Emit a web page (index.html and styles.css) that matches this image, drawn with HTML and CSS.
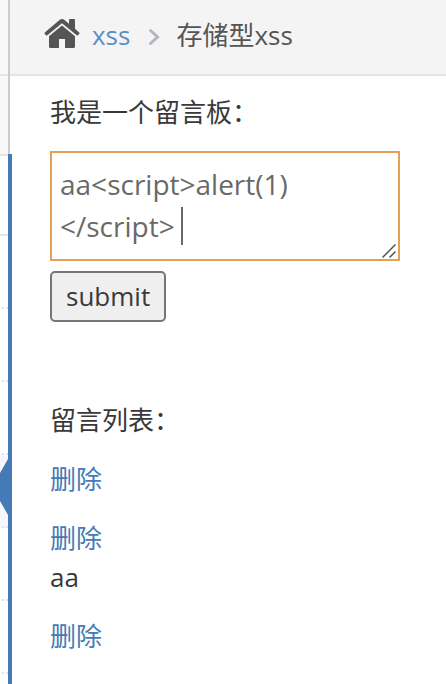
FILE: index.html
```
<!DOCTYPE html>
<html lang="zh-CN">
<head>
<meta charset="utf-8">
<meta name="viewport" content="width=device-width, initial-scale=1">
<title>存储型xss</title>
<link rel="stylesheet" href="styles.css">
</head>
<body>
<div class="page">
  <aside class="sidebar">
    <div class="sidebar-top">
      <div class="sidebar-item"></div>
      <div class="sidebar-item"></div>
    </div>
    <div class="submenu">
      <div class="submenu-head"></div>
      <div class="submenu-item"></div>
      <div class="submenu-item"></div>
      <div class="submenu-item"></div>
      <div class="submenu-item active"><svg class="arrow" viewBox="0 0 8 56" aria-hidden="true"><path d="M8 0L0 14V42L8 56Z"/></svg></div>
      <div class="submenu-item"></div>
      <div class="submenu-item"></div>
      <div class="submenu-item"></div>
    </div>
  </aside>
  <div class="main">
    <nav class="breadcrumb">
      <svg class="home" viewBox="0 0 36 30" aria-hidden="true">
        <path d="M18 6.500L31 17.300V27.500Q31 29 29.500 29H21V20H15V29H6.500Q5 29 5 27.500V17.300Z"/>
        <path d="M18 0Q19.200 0 20.200 .8L25 4.800V1Q25 0 26 0H30Q31 0 31 1V9.800L35.200 13.400Q35.900 14 35.300 14.700L34 16.200Q33.400 16.900 32.700 16.300L18 4.200L3.300 16.300Q2.600 16.900 2 16.200L.7 14.700Q.1 14 .8 13.400L15.800 .8Q16.800 0 18 0Z"/>
      </svg>
      <a class="crumb-link" href="#">xss</a>
      <svg class="chevron" viewBox="0 0 12 18" aria-hidden="true"><path d="M2.500 2.500L9.500 9L2.500 15.500"/></svg>
      <span>存储型xss</span>
    </nav>
    <main class="content">
      <form class="form">
        <label class="title" for="message">我是一个留言板：</label>
        <div class="field">
          <textarea class="message" id="message" rows="2">aa&lt;script&gt;alert(1)
&lt;/script&gt; </textarea>
          <span class="caret"></span>
          <svg class="grip" viewBox="0 0 14 14" aria-hidden="true"><path d="M.5 13.500L13.500 .5M7.500 13.500L13.500 7.500"/></svg>
        </div>
        <button class="submit" type="button">submit</button>
      </form>
      <section class="list">
        <h2 class="title">留言列表：</h2>
        <div class="entry"><a href="#">删除</a></div>
        <div class="entry"><a href="#">删除</a></div>
        <p class="text">aa</p>
        <div class="entry"><a href="#">删除</a></div>
      </section>
    </main>
  </div>
</div>
</body>
</html>
```
FILE: styles.css
```
* {
  box-sizing: border-box;
}

body {
  margin: 0;
  background: #fff;
  color: #393939;
  font: 26px/39px "Open Sans", "Noto Sans CJK SC", sans-serif;
}

a {
  color: #447bb6;
  text-decoration: none;
}

.page {
  display: flex;
  height: 100vh;
  overflow: hidden;
}

.sidebar {
  position: relative;
  z-index: 1;
  flex: none;
  width: 12px;
  margin-right: -2px;
}

.sidebar-top {
  width: 10px;
  border-right: 2px solid #ccc;
  background: #f8f8f8;
}

.sidebar-item {
  height: 80px;
  border-bottom: 2px solid #e5e5e5;
}

.sidebar-item:first-child {
  height: 76px;
}

.submenu {
  margin-top: -2px;
  border-right: 4px solid #447bb6;
}

.submenu-head {
  height: 82px;
  border-top: 2px solid #e5e5e5;
  border-bottom: 2px solid #e5e5e5;
  background: #fff;
}

.submenu-item {
  height: 73px;
  background: repeating-linear-gradient(90deg, transparent 0 2px, #e2e2e2 2px 4px) bottom / 100% 2px no-repeat;
}

.submenu-item.active {
  padding-top: 4px;
  background-color: #f5f7fc;
}

.arrow {
  display: block;
  width: 8px;
  height: 56px;
  fill: #447bb6;
}

.main {
  flex: 1;
  min-width: 0;
}

.breadcrumb {
  display: flex;
  align-items: center;
  height: 76px;
  padding: 0 34px 4px;
  border-bottom: 2px solid #e5e5e5;
  background: #f4f4f4;
  color: #555;
}

.home {
  width: 36px;
  height: 30px;
  margin: 0 12px 2px 0;
  fill: #555;
}

.crumb-link {
  color: #5a8fc4;
}

.chevron {
  width: 12px;
  height: 18px;
  margin: 4px 16px 0 18px;
  fill: none;
  stroke: #b2b6bf;
  stroke-width: 3;
  stroke-linecap: round;
}

.content {
  padding: 17px 40px;
}

.title {
  display: block;
  margin: 0;
  font-size: 26px;
  font-weight: 400;
}

.field {
  position: relative;
  max-width: 350px;
  margin: 19px 0 10px;
}

.message {
  display: block;
  width: 100%;
  height: 110px;
  padding: 10px 8px;
  border: 2px solid #e59f57;
  border-radius: 0;
  outline: 0;
  background: #fff;
  color: #696969;
  font: 28px/42px "Open Sans", sans-serif;
  resize: none;
  overflow: hidden;
}

.caret {
  position: absolute;
  top: 56px;
  left: 131px;
  width: 2px;
  height: 38px;
  background: #696969;
}

.grip {
  position: absolute;
  right: 4px;
  bottom: 3px;
  width: 14px;
  height: 14px;
  fill: none;
  stroke: #555;
  stroke-width: 1.5;
}

.submit {
  display: block;
  padding: 4px 14px;
  border: 2px solid #767676;
  border-radius: 5px;
  background: #efefef;
  color: #393939;
  font: inherit;
}

.list {
  padding-top: 79px;
}

.entry {
  padding-top: 20px;
}

.text {
  margin: 0;
}
```
